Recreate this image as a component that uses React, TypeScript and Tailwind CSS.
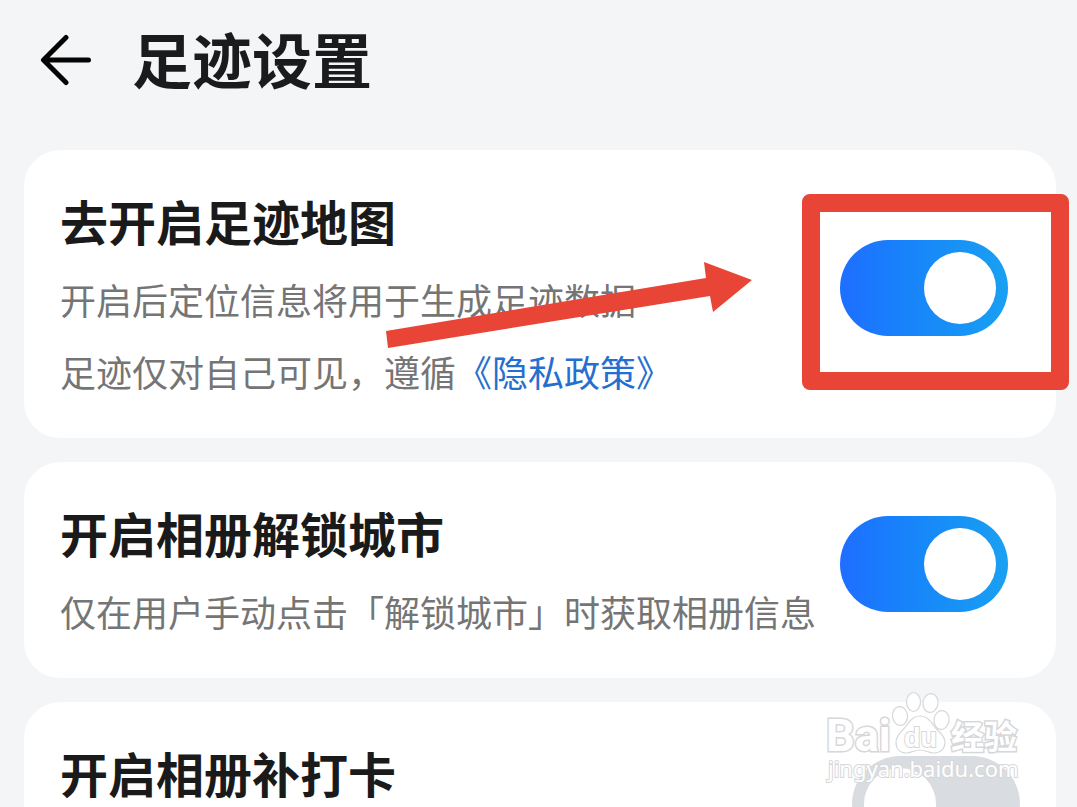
import { useState, type ReactNode } from 'react';

type SettingCardProps = {
  id: string;
  title: string;
  children?: ReactNode;
  defaultChecked?: boolean;
  highlight?: boolean;
  className?: string;
};

function SettingCard({ id, title, children, defaultChecked = false, highlight = false, className = 'pr-12' }: SettingCardProps) {
  const [checked, setChecked] = useState(defaultChecked);

  return (
    <section className={`relative flex items-center justify-between gap-6 rounded-[36px] bg-white pt-9 pb-[30px] pl-9 ${className}`}>
      <div className="min-w-0 flex-1">
        <label htmlFor={id} className="block text-[48px] leading-[68px] font-bold text-[#1a1a1a]">
          {title}
        </label>
        <div className="mt-[9px] mb-px min-h-[72px] text-[36px] leading-[72px] text-[#757575]">{children}</div>
      </div>

      <div className="relative mb-[18px] h-24 w-42 shrink-0">
        <input
          id={id}
          type="checkbox"
          role="switch"
          checked={checked}
          onChange={(e) => setChecked(e.target.checked)}
          className="block h-24 w-42 cursor-pointer appearance-none rounded-full bg-[#d9dde1] p-3 before:block before:size-18 before:rounded-full before:bg-white checked:bg-linear-to-r checked:from-[#1e6eff] checked:to-[#1aa0f2] checked:before:ml-18"
        />
        {highlight && (
          <div className="pointer-events-none absolute -top-[46px] -right-[61px] -bottom-[54px] -left-[38px] rounded-lg border-[18px] border-[#e84536]" />
        )}
      </div>

      {highlight && <PointerArrow />}
    </section>
  );
}

function PointerArrow() {
  return (
    <svg className="pointer-events-none absolute top-[110px] left-[360px]" width="370" height="92" viewBox="0 0 370 92" aria-hidden="true">
      <path d="M2 71 322 18 320 2 368 20 329 52 326 36 4 88Z" fill="#e84536" />
    </svg>
  );
}

function Watermark() {
  return (
    <svg className="pointer-events-none absolute right-[47px] bottom-[12px]" width="210" height="110" viewBox="0 0 210 110" aria-label="Baidu 经验">
      <g fill="#ffffff" stroke="#d6d7d9" strokeWidth="1.2">
        <text x="6" y="66" fontSize="45" strokeWidth="3" paintOrder="stroke" className="font-[Roboto,sans-serif] font-bold">Bai</text>
        <ellipse cx="80" cy="31" rx="7.5" ry="9.5" transform="rotate(-8 80 31)" />
        <ellipse cx="93.5" cy="17" rx="7" ry="9.5" />
        <ellipse cx="110.5" cy="18" rx="7.5" ry="9.5" transform="rotate(8 110.5 18)" />
        <ellipse cx="121.5" cy="35" rx="7.5" ry="9.5" transform="rotate(8 121.5 35)" />
        <path d="M100 31c7 0 11 5 14 10 4 6 11 9 11 16 0 7-5 11-11 11-5 0-9-3-14-3s-9 3-14 3c-6 0-10-4-10-11 0-7 6-10 10-16 4-5 7-10 14-10Z" />
        <text x="84" y="62" fontSize="27" strokeWidth="2" paintOrder="stroke" className="font-['Liberation_Sans',sans-serif] font-bold">du</text>
        <text x="131" y="64" fontSize="33" strokeWidth="3" paintOrder="stroke" className="font-['Noto_Sans_CJK_SC',sans-serif] font-bold">经验</text>
        <text x="8" y="92" fontSize="22" strokeWidth="2" paintOrder="stroke" className="font-['Noto_Sans',sans-serif]">jingyan.baidu.com</text>
      </g>
    </svg>
  );
}

export default function App() {
  return (
    <div lang="zh-CN" className="relative h-screen overflow-hidden bg-[#f4f5f7] font-['Noto_Sans_CJK_SC',sans-serif]">
      <header className="mb-[30px] flex h-[120px] items-center gap-10 pl-10">
        <button type="button" aria-label="返回">
          <svg width="52" height="52" viewBox="0 0 52 52" fill="none" stroke="#050505" strokeWidth="5" strokeLinecap="round" strokeLinejoin="round">
            <path d="M26 3.5 3.5 26 26 48.5M4 26h44.500" />
          </svg>
        </button>
        <h1 className="mb-1 text-[60px] leading-[72px] font-bold text-[#1a1b1d]">足迹设置</h1>
      </header>

      <main className="flex flex-col gap-6 pr-[21px] pl-6">
        <SettingCard id="footprint-map" title="去开启足迹地图" defaultChecked highlight>
          <p>开启后定位信息将用于生成足迹数据</p>
          <p>
            足迹仅对自己可见，遵循
            <a href="#privacy" className="text-[#256fd0]">《隐私政策》</a>
          </p>
        </SettingCard>

        <SettingCard id="album-unlock" title="开启相册解锁城市" defaultChecked>
          <p>仅在用户手动点击「解锁城市」时获取相册信息</p>
        </SettingCard>

        <SettingCard id="album-checkin" title="开启相册补打卡" className="pr-9" />
      </main>

      <Watermark />
    </div>
  );
}
